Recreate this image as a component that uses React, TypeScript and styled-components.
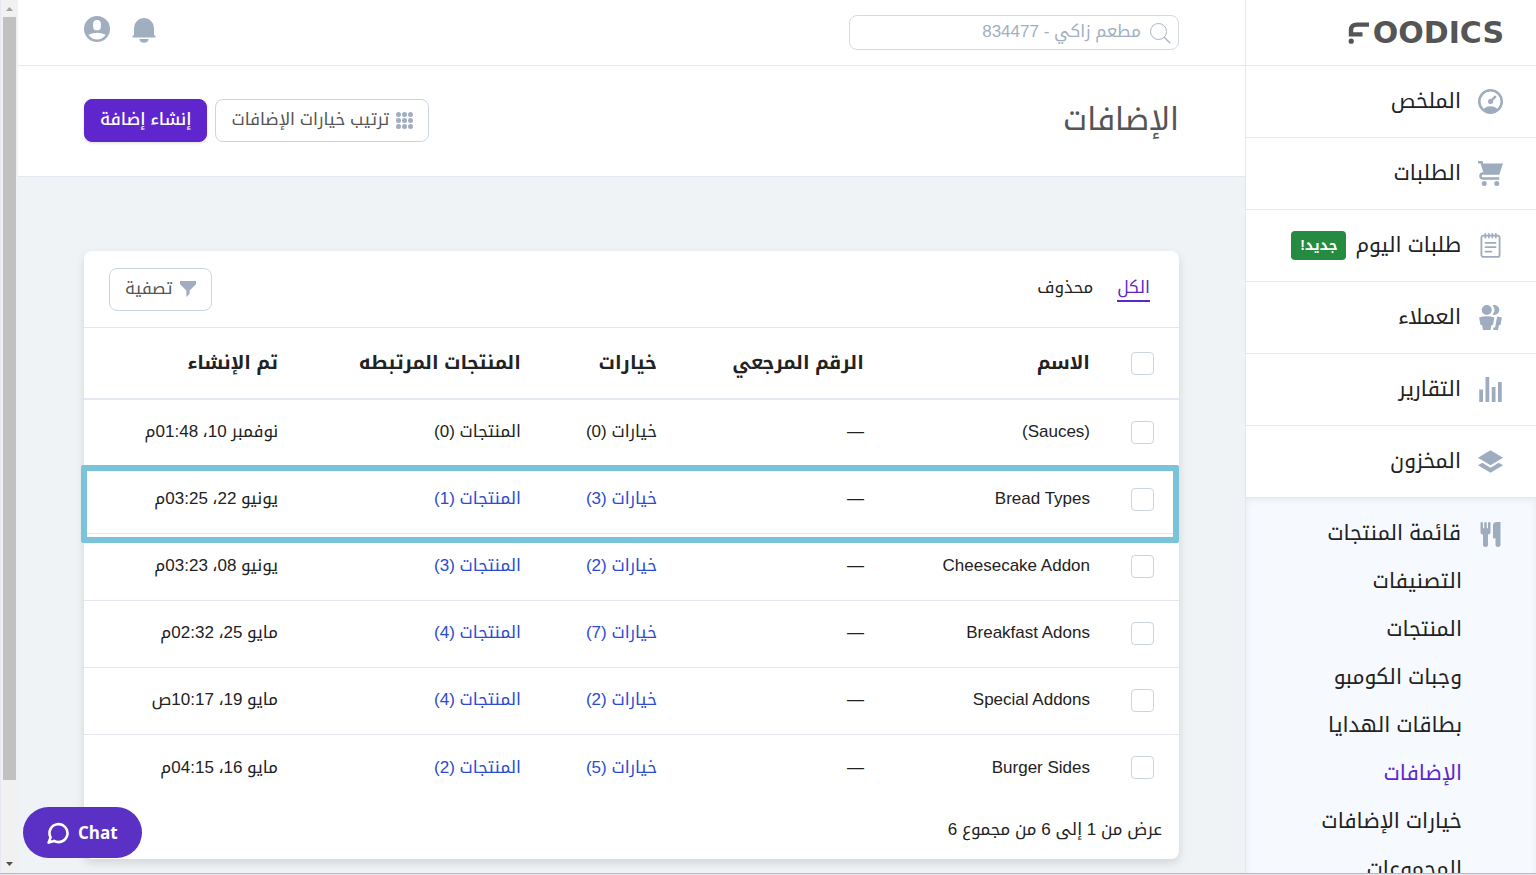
import React from "react";
import styled, { createGlobalStyle } from "styled-components";

const sans = `"Liberation Sans", "Noto Kufi Arabic", "Noto Sans Arabic", "DejaVu Sans", sans-serif`;

const GlobalStyle = createGlobalStyle`
  *, *::before, *::after { box-sizing: border-box; }
  body { margin: 0; background: #eff3f6; color: #222; font-family: ${sans}; font-size: 17px; line-height: 24px; }
  button, input { font: inherit; }
  a { color: inherit; text-decoration: none; }
  h1 { margin: 0; }
`;

const Page = styled.div`
  display: flex;
  flex-direction: column;
  height: 100vh;
  overflow: hidden;
  border-bottom: 1px solid #e9e6f0;
`;
const Shell = styled.div`
  flex: 1;
  min-height: 0;
  display: flex;
  border-bottom: 1px solid #bcb6c2;
`;

/* Sidebar */
const Sidebar = styled.aside`
  width: 291px;
  flex: none;
  overflow: hidden;
  background: #fff;
  border-left: 1px solid #e4e7ef;
`;
const Brand = styled.a`
  display: flex;
  align-items: center;
  height: 66px;
  padding: 0 32px;
  direction: ltr;
  justify-content: flex-end;
  gap: 3px;
  border-bottom: 1px solid #e4e7ef;
  color: #555;
  font: bold 30px/64px "DejaVu Sans", sans-serif;
`;
const NavLink = styled.a<{ $plain?: boolean }>`
  display: flex;
  align-items: center;
  gap: 17px;
  height: 72px;
  padding: 0 33px;
  font-size: 21px;
  border-bottom: ${(p) => (p.$plain ? "0" : "1px solid #e4e7ef")};
`;
const NavLabel = styled.span`
  padding-bottom: 2px;
`;
const NavIcon = styled.svg`
  width: 25px;
  height: 25px;
  flex: none;
  fill: #9fabbf;
`;
const Badge = styled.span`
  margin-right: -8px;
  padding: 0 9px;
  border-radius: 4px;
  background: #258b40;
  color: #fff;
  font-size: 14px;
  font-weight: bold;
  line-height: 29px;
`;
const NavGroup = styled.div`
  background: #f6faff;
  box-shadow: inset 0 2px 6px rgba(40, 50, 80, 0.08);
`;
const SubNav = styled.div`
  margin-top: -1px;
`;
const SubLink = styled.a<{ $active?: boolean }>`
  display: block;
  height: 48px;
  padding-right: 74px;
  font-size: 21px;
  line-height: 24px;
  color: ${(p) => (p.$active ? "#6026cd" : "inherit")};
`;

/* Main column */
const Main = styled.main`
  flex: 1;
  min-width: 0;
  overflow: hidden;
`;
const TopBar = styled.header`
  display: flex;
  align-items: center;
  justify-content: space-between;
  height: 66px;
  padding: 0 66px;
  background: #fff;
  border-bottom: 1px solid #e4e7ef;
`;
const SearchBox = styled.label`
  display: flex;
  align-items: center;
  gap: 8px;
  width: 330px;
  height: 35px;
  padding: 0 7px;
  border: 1px solid #d5d9e6;
  border-radius: 8px;
`;
const SearchInput = styled.input`
  flex: 1;
  min-width: 0;
  padding: 0 0 2px;
  border: 0;
  outline: 0;
  background: none;
  color: #9fafc0;
`;
const Tools = styled.div`
  display: flex;
  align-items: center;
  gap: 22px;
`;
const IconButton = styled.button`
  display: flex;
  padding: 0 0 8px;
  border: 0;
  background: none;
  fill: #a0aec0;
`;
const TitleBar = styled.section`
  display: flex;
  align-items: center;
  justify-content: space-between;
  height: 111px;
  padding: 0 66px 2px;
  background: #fff;
  border-bottom: 1px solid #e4e7ef;
`;
const Title = styled.h1`
  font-size: 31px;
  font-weight: normal;
  line-height: 48px;
  color: #555;
`;
const Actions = styled.div`
  display: flex;
  gap: 8px;
`;
const Button = styled.button<{ $primary?: boolean }>`
  display: flex;
  align-items: center;
  gap: 7px;
  height: 43px;
  padding: 0 15px;
  border: 1px solid ${(p) => (p.$primary ? "#6026cd" : "#cbd5e0")};
  border-radius: 8px;
  background: ${(p) => (p.$primary ? "#6026cd" : "#fff")};
  color: ${(p) => (p.$primary ? "#fff" : "#555")};
  box-shadow: ${(p) => (p.$primary ? "0 1px 3px rgba(0,0,0,.15)" : "none")};
  font-weight: ${(p) => (p.$primary ? 500 : 400)};
  svg { fill: #a0aec0; }
`;
const Content = styled.section`
  padding: 74px 66px 14px;
`;
const Card = styled.div`
  background: #fff;
  border-radius: 8px;
  box-shadow: 0 4px 10px rgba(0, 0, 0, 0.12);
`;
const CardBar = styled.div`
  display: flex;
  align-items: center;
  justify-content: space-between;
  height: 77px;
  padding-inline: 29px 25px;
  border-bottom: 1px solid #e4e7ef;
`;
const Tabs = styled.nav`
  display: flex;
  gap: 24px;
  padding-bottom: 2px;
`;
const Tab = styled.a<{ $active?: boolean }>`
  line-height: 25px;
  border-bottom: 2px solid ${(p) => (p.$active ? "#6026cd" : "transparent")};
  color: ${(p) => (p.$active ? "#6026cd" : "inherit")};
`;
const Table = styled.table`
  width: 100%;
  table-layout: fixed;
  border-collapse: separate;
  border-spacing: 0;
`;
const HeadCell = styled.th`
  height: 72px;
  padding: 0 24px;
  text-align: right;
  font-size: 19px;
  border-bottom: 2px solid #e4e8f4;
`;
const Row = styled.tr`
  position: relative;
`;
const Cell = styled.td`
  height: 67px;
  padding: 0 24px 2px;
  border-bottom: 1px solid #e4e7ef;
  white-space: nowrap;
  ${Row}:last-child & { border-bottom: 0; }
`;
const CountLink = styled.a`
  color: #2a4bd0;
`;
const Check = styled.input`
  display: block;
  appearance: none;
  width: 23px;
  height: 23px;
  margin: 1px;
  border: 1px solid #cbd5e0;
  border-radius: 4px;
  background: #fff;
`;
const Highlight = styled.span`
  position: absolute;
  z-index: 1;
  inset: -2px 0 -9px -3px;
  border: 6px solid #79c3db;
  border-radius: 2px;
  pointer-events: none;
`;
const CardFoot = styled.div`
  padding: 16px 17px 17px;
`;

/* Page scroll bar */
const ScrollBar = styled.div`
  display: flex;
  flex-direction: column;
  align-items: center;
  width: 18px;
  flex: none;
  background: #f1f1f1;
  border-left: 1px solid #e6e6f5;
`;
const ScrollArrow = styled.svg`
  width: 17px;
  height: 17px;
  flex: none;
`;
const Track = styled.div`
  flex: 1;
  width: 13px;
`;
const Thumb = styled.div`
  height: 91%;
  background: #c1c1c1;
`;

const ChatButton = styled.button`
  position: fixed;
  left: 23px;
  bottom: 17px;
  display: flex;
  align-items: center;
  gap: 9px;
  direction: ltr;
  height: 51px;
  padding: 0 24px;
  border: 0;
  border-radius: 26px;
  background: #5a31c4;
  color: #fff;
  font: 700 17px/24px "Open Sans", "Noto Sans", sans-serif;
`;

const NotesIcon = () => (
  <NavIcon viewBox="0 0 25 25" aria-hidden="true">
    <g fill="none" stroke="#9fabbf" strokeWidth="1.8" strokeLinecap="round">
      <rect x="3.4" y="2.6" width="18.2" height="21.3" rx="2" />
      <path d="M7.3 1v3.6M10.8 1v3.6M14.3 1v3.6M17.8 1v3.6M7.5 9.8h10M7.5 14.2h10M7.5 18.6h6" />
    </g>
  </NavIcon>
);

const nav = [
  { label: "الملخص", d: "M10 20a10 10 0 1 1 0-20 10 10 0 0 1 0 20zm-5.6-4.29a9.95 9.95 0 0 1 11.2 0 8 8 0 1 0-11.2 0zm6.12-7.64l3.02-3.02 1.41 1.41-3.02 3.02a2 2 0 1 1-1.41-1.41z" },
  { label: "الطلبات", d: "M4 2h16l-3 9H4a1 1 0 1 0 0 2h13v2H4a3 3 0 0 1 0-6h.33L3 5 2 2H0V0h3a1 1 0 0 1 1 1v1zm1 18a2 2 0 1 1 0-4 2 2 0 0 1 0 4zm10 0a2 2 0 1 1 0-4 2 2 0 0 1 0 4z" },
  { label: "طلبات اليوم", badge: "جديد!" },
  { label: "العملاء", d: "M7 8a4 4 0 1 1 0-8 4 4 0 0 1 0 8zm0 1c2.15 0 4.2.4 6.1 1.09L12 16h-1.25L10 20H4l-.75-4H2L.9 10.09A17.93 17.93 0 0 1 7 9zm8.31.17c1.32.18 2.59.48 3.8.92L18 16h-1.25L16 20h-3.96l.37-2h1.25l1.65-8.83zM13 0a4 4 0 1 1-1.33 7.76 5.96 5.96 0 0 0 0-7.52C12.1.1 12.53 0 13 0z" },
  { label: "التقارير", d: "M1 10h3v10H1V10zM6 0h3v20H6V0zm5 8h3v12h-3V8zm5-4h3v16h-3V4z" },
  { label: "المخزون", d: "M10 1l10 6-10 6L0 7l10-6zm6.67 10L20 13l-10 6-10-6 3.33-2L10 15l6.67-4z" },
];

const foodIcon = "M18 11v7a2 2 0 0 1-4 0v-5h-2V3a3 3 0 0 1 3-3h3v11zM4 10a2 2 0 0 1-2-2V1a1 1 0 0 1 2 0v4h1V1a1 1 0 0 1 2 0v4h1V1a1 1 0 0 1 2 0v7a2 2 0 0 1-2 2v8a2 2 0 0 1-4 0v-8z";

const subNav = ["التصنيفات", "المنتجات", "وجبات الكومبو", "بطاقات الهدايا", "الإضافات", "خيارات الإضافات", "المجموعات"];

const rows = [
  { name: "(Sauces)", options: 0, products: 0, created: "نوفمبر 10، 01:48م" },
  { name: "Bread Types", options: 3, products: 1, created: "يونيو 22، 03:25م", highlighted: true },
  { name: "Cheesecake Addon", options: 2, products: 3, created: "يونيو 08، 03:23م" },
  { name: "Breakfast Adons", options: 7, products: 4, created: "مايو 25، 02:32م" },
  { name: "Special Addons", options: 2, products: 4, created: "مايو 19، 10:17ص" },
  { name: "Burger Sides", options: 5, products: 2, created: "مايو 16، 04:15م" },
];

const columns = [65, 226, 207, 136, 243, 218];

function Count({ label, value }: { label: string; value: number }) {
  const text = `${label} (${value})`;
  return value ? <CountLink href="#">{text}</CountLink> : <>{text}</>;
}

export default function App() {
  return (
    <Page dir="rtl" lang="ar">
      <GlobalStyle />
      <Shell>
        <Sidebar>
          <Brand href="#" aria-label="Foodics">
            <svg width="22" height="22" viewBox="0 0 22 22" fill="none" stroke="#555" strokeWidth="4.4" aria-hidden="true">
              <path d="M21 2.6H9Q3 2.6 3 8v4.4H14.5" />
              <circle cx="3.2" cy="19.2" r="2.6" fill="#555" stroke="none" />
            </svg>
            OODICS
          </Brand>
          <nav>
            {nav.map((item) => (
              <NavLink key={item.label} href="#">
                {item.d ? (
                  <NavIcon viewBox="0 0 20 20" aria-hidden="true"><path d={item.d} /></NavIcon>
                ) : (
                  <NotesIcon />
                )}
                <NavLabel>{item.label}</NavLabel>
                {item.badge && <Badge>{item.badge}</Badge>}
              </NavLink>
            ))}
            <NavGroup>
              <NavLink href="#" $plain>
                <NavIcon viewBox="0 0 20 20" aria-hidden="true"><path d={foodIcon} /></NavIcon>
                <NavLabel>قائمة المنتجات</NavLabel>
              </NavLink>
              <SubNav>
                {subNav.map((label) => (
                  <SubLink key={label} href="#" $active={label === "الإضافات"}>{label}</SubLink>
                ))}
              </SubNav>
            </NavGroup>
          </nav>
        </Sidebar>

        <Main>
          <TopBar>
            <SearchBox>
              <svg width="22" height="22" viewBox="0 0 22 22" fill="none" stroke="#a9b5c6" aria-hidden="true">
                <circle cx="9.5" cy="9.5" r="8" />
                <path d="M15.2 15.2l6 6" strokeWidth="1.4" />
              </svg>
              <SearchInput aria-label="بحث" defaultValue="مطعم زاكي - 834477" />
            </SearchBox>
            <Tools>
              <IconButton aria-label="الإشعارات">
                <svg width="24" height="32" viewBox="0 -2 24 32">
                  <path d="M2 20V13a10 10 0 0 1 20 0v7l1.5 1v1.5H.5V21zM7.3 24h9.4a4.8 4.8 0 0 1-9.4 0z" />
                </svg>
              </IconButton>
              <IconButton aria-label="الحساب">
                <svg width="26" height="26" viewBox="0 0 20 20">
                  <path d="M10 20a10 10 0 1 1 0-20 10 10 0 0 1 0 20zM7 6v2a3 3 0 1 0 6 0V6a3 3 0 1 0-6 0zm-3.65 8.44a8 8 0 0 0 13.3 0 15.94 15.94 0 0 0-13.3 0z" />
                </svg>
              </IconButton>
            </Tools>
          </TopBar>

          <TitleBar>
            <Title>الإضافات</Title>
            <Actions>
              <Button>
                <svg width="17" height="17" viewBox="0 0 17 17" aria-hidden="true">
                  {[2.5, 8.5, 14.5].map((y) => [2.5, 8.5, 14.5].map((x) => <circle key={`${x}-${y}`} cx={x} cy={y} r="2.5" />))}
                </svg>
                ترتيب خيارات الإضافات
              </Button>
              <Button $primary>إنشاء إضافة</Button>
            </Actions>
          </TitleBar>

          <Content>
            <Card>
              <CardBar>
                <Tabs>
                  <Tab href="#" $active>الكل</Tab>
                  <Tab href="#">محذوف</Tab>
                </Tabs>
                <Button>
                  <svg width="16" height="16" viewBox="0 0 20 20" aria-hidden="true">
                    <path d="M12 12l8-8V0H0v4l8 8v8l4-4v-4z" />
                  </svg>
                  تصفية
                </Button>
              </CardBar>
              <Table>
                <colgroup>
                  {columns.map((width, i) => <col key={i} width={width} />)}
                </colgroup>
                <thead>
                  <tr>
                    <HeadCell><Check type="checkbox" aria-label="تحديد الكل" /></HeadCell>
                    <HeadCell>الاسم</HeadCell>
                    <HeadCell>الرقم المرجعي</HeadCell>
                    <HeadCell>خيارات</HeadCell>
                    <HeadCell>المنتجات المرتبطه</HeadCell>
                    <HeadCell>تم الإنشاء</HeadCell>
                  </tr>
                </thead>
                <tbody>
                  {rows.map((row) => (
                    <Row key={row.name}>
                      <Cell>
                        <Check type="checkbox" aria-label={row.name} />
                        {row.highlighted && <Highlight />}
                      </Cell>
                      <Cell><bdi>{row.name}</bdi></Cell>
                      <Cell>—</Cell>
                      <Cell><Count label="خيارات" value={row.options} /></Cell>
                      <Cell><Count label="المنتجات" value={row.products} /></Cell>
                      <Cell>{row.created}</Cell>
                    </Row>
                  ))}
                </tbody>
              </Table>
              <CardFoot>عرض من 1 إلى 6 من مجموع 6</CardFoot>
            </Card>
          </Content>
        </Main>

        <ScrollBar aria-hidden="true">
          <ScrollArrow viewBox="0 0 17 17"><path d="M5 11l3.5-4 3.5 4z" fill="#a3a3a3" /></ScrollArrow>
          <Track><Thumb /></Track>
          <ScrollArrow viewBox="0 0 17 17"><path d="M5 6l3.5 4L12 6z" fill="#505050" /></ScrollArrow>
        </ScrollBar>
      </Shell>

      <ChatButton>
        <svg width="22" height="22" viewBox="0 0 22 22" fill="none" stroke="#fff" strokeWidth="2.6" strokeLinejoin="round" aria-hidden="true">
          <path d="M3.6 15.4A9 9 0 1 1 7 18.9L1.6 20.6z" />
        </svg>
        Chat
      </ChatButton>
    </Page>
  );
}
